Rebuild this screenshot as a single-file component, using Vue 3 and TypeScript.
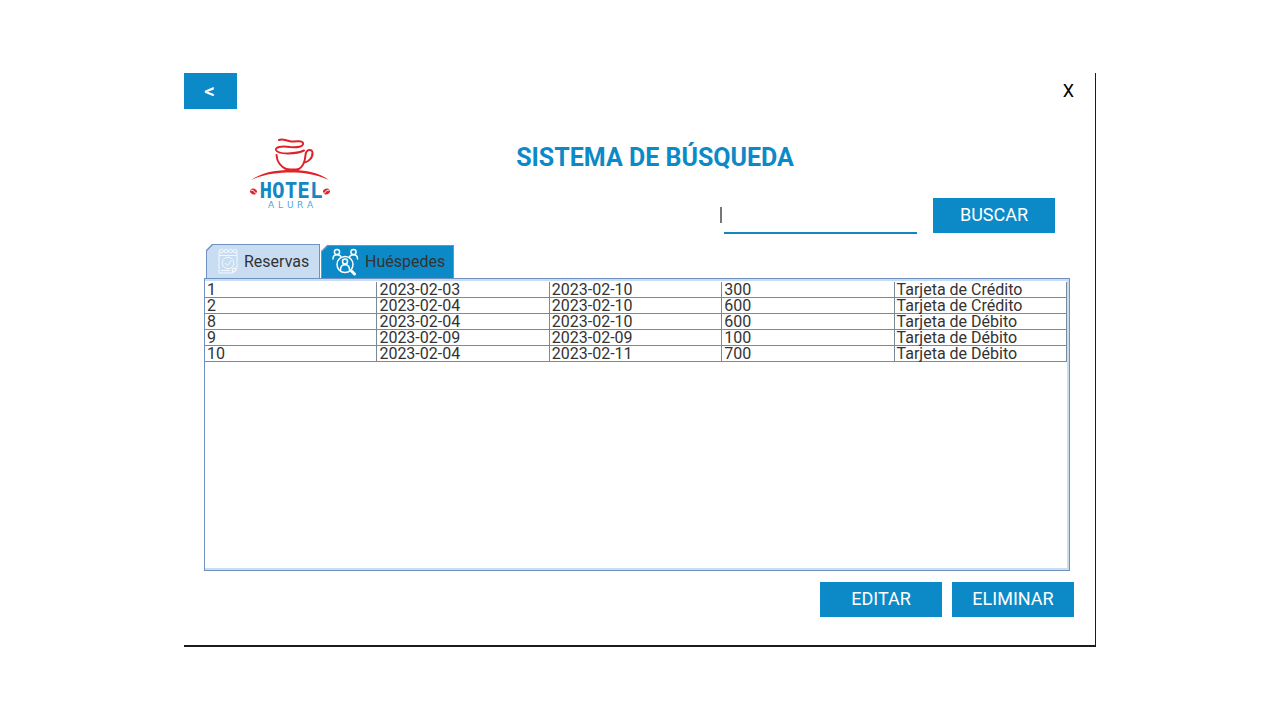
<script setup lang="ts">
import { ref } from 'vue'

interface Booking {
  id: number
  checkIn: string
  checkOut: string
  value: number
  payment: string
}

const bookings: Booking[] = [
  { id: 1, checkIn: '2023-02-03', checkOut: '2023-02-10', value: 300, payment: 'Tarjeta de Crédito' },
  { id: 2, checkIn: '2023-02-04', checkOut: '2023-02-10', value: 600, payment: 'Tarjeta de Crédito' },
  { id: 8, checkIn: '2023-02-04', checkOut: '2023-02-10', value: 600, payment: 'Tarjeta de Débito' },
  { id: 9, checkIn: '2023-02-09', checkOut: '2023-02-09', value: 100, payment: 'Tarjeta de Débito' },
  { id: 10, checkIn: '2023-02-04', checkOut: '2023-02-11', value: 700, payment: 'Tarjeta de Débito' },
]

const query = ref('')
</script>

<template>
  <div class="page">
    <main class="window">
      <div class="titlebar">
        <button type="button" class="back">&lt;</button>
        <button type="button" class="close">X</button>
      </div>

      <header class="head">
        <svg class="logo" viewBox="0 0 82 72" role="img" aria-labelledby="logo-title">
          <title id="logo-title">Hotel Alura</title>
          <g fill="none" stroke="#e02229" stroke-linecap="round">
            <path d="M30 3 C34 1 37 4 42 4.500 C48 5 53 2.500 54 6 C55 10 48 10.500 41 10 C32 9 26 10 27 13 C29 18 48 17 55 13.500" stroke-width="2" />
            <path d="M27.500 18 C28 25 32 30 38 32.500 H49 C54 30 56 25 56.500 18 C57 12 63 11.500 63.500 15.500 C64 21 59 25 55.500 25.500" stroke-width="2" />
            <path d="M38 32.500 C42 34 46 34 49 32.500" stroke-width="2.500" />
          </g>
          <path d="M2 43 C15 34 31 33 42 33 C55 33 69 35 80 43 C66 37 54 35.500 42 35.500 C29 35.500 15 37 2 43Z" fill="#e02229" />
          <g fill="#e02229">
            <ellipse cx="4.500" cy="54.500" rx="3.500" ry="2.800" transform="rotate(20 4.500 54.500)" />
            <ellipse cx="77.500" cy="54.500" rx="3.500" ry="2.800" transform="rotate(-20 77.500 54.500)" />
          </g>
          <g fill="none" stroke="#fff" stroke-width="1">
            <path d="M1.500 53 Q5 53 5.500 55 T9 56" />
            <path d="M80.500 53 Q77 53 76.500 55 T73 56" />
          </g>
          <text class="logo-name" x="42" y="61" text-anchor="middle">HOTEL</text>
          <text class="logo-sub" x="19 29 38 48 58" y="71">ALURA</text>
        </svg>

        <div class="head-main">
          <h1>SISTEMA DE BÚSQUEDA</h1>
          <form class="search" @submit.prevent>
            <span class="caret" aria-hidden="true"></span>
            <input v-model="query" type="text" aria-label="Buscar" />
            <button type="submit" class="action">BUSCAR</button>
          </form>
        </div>
      </header>

      <div class="tabs" role="tablist">
        <button id="tab-bookings" type="button" class="tab selected" role="tab" aria-selected="true" aria-controls="panel">
          <svg class="icon-cal" viewBox="0 0 20 26" fill="none" stroke="#f3f8fd" stroke-width="1" aria-hidden="true">
            <path d="M1 3.500 H19 V20 L14.500 25 H1Z M1 7.500 H19" />
            <g fill="#c8dcf2">
              <circle cx="3.500" cy="3" r="1.800" />
              <circle cx="8" cy="3" r="1.800" />
              <circle cx="12.500" cy="3" r="1.800" />
              <circle cx="17" cy="3" r="1.800" />
            </g>
            <circle cx="10" cy="15" r="5.800" />
            <path d="M7 15 L9.500 17.500 L13.500 12 M3 22.500 H12 M14.500 25 V20.500 H19" />
            <circle cx="16" cy="22" r="2" />
          </svg>
          <span>Reservas</span>
        </button>
        <button id="tab-guests" type="button" class="tab" role="tab" aria-selected="false" aria-controls="panel">
          <svg class="icon-guests" viewBox="0 0 28 28" fill="none" stroke="#fff" stroke-width="1.500" stroke-linecap="round" aria-hidden="true">
            <circle cx="6" cy="4" r="2.600" />
            <circle cx="22.500" cy="4" r="2.600" />
            <path d="M2 11 C2 7.500 4 6.800 6 6.800 C8 6.800 9.500 7.500 10 9 M18.500 9 C19 7.500 20.500 6.800 22.500 6.800 C24.500 6.800 26.500 7.500 26.500 11" />
            <circle cx="14" cy="16.500" r="8" />
            <circle cx="14" cy="13.500" r="2.500" />
            <path d="M9.500 22 C9.500 18 11 16.800 14 16.800 C17 16.800 18.500 18 18.500 22" />
            <path d="M20 22.500 L23.500 26" stroke-width="3" />
          </svg>
          <span>Huéspedes</span>
        </button>
      </div>

      <section id="panel" class="panel" role="tabpanel" aria-labelledby="tab-bookings">
        <table aria-label="Reservas">
          <tbody>
            <tr v-for="b in bookings" :key="b.id">
              <td>{{ b.id }}</td>
              <td>{{ b.checkIn }}</td>
              <td>{{ b.checkOut }}</td>
              <td>{{ b.value }}</td>
              <td>{{ b.payment }}</td>
            </tr>
          </tbody>
        </table>
      </section>

      <footer class="foot">
        <button type="button" class="action">EDITAR</button>
        <button type="button" class="action">ELIMINAR</button>
      </footer>
    </main>
  </div>
</template>

<style>
body {
  background: #fff;
}
</style>

<style scoped>
.page {
  box-sizing: border-box;
  display: flex;
  min-height: 100vh;
  padding: 73px 184px;
  font-family: Roboto, "Liberation Sans", sans-serif;
  color: #333;
}

.window {
  box-sizing: border-box;
  display: flex;
  flex: 1;
  flex-direction: column;
  min-width: 0;
  border-right: 1px solid #1b1b1b;
  border-bottom: 2px solid #1b1b1b;
}

button {
  padding: 0;
  border: 0;
  font-family: inherit;
  cursor: pointer;
}

.titlebar {
  display: flex;
  justify-content: space-between;
}

.back {
  width: 53px;
  height: 36px;
  padding-right: 2px;
  background: #0c8ac7;
  color: #fff;
  font-size: 21px;
  font-weight: 500;
}

.close {
  width: 53px;
  height: 36px;
  padding-bottom: 2px;
  background: transparent;
  color: #000;
  font-size: 18px;
}

.head {
  display: flex;
  align-items: flex-start;
  padding: 28px 40px 0 65px;
}

.logo {
  flex: none;
  width: 82px;
  height: 72px;
}

.logo-name {
  fill: #1787c4;
  font-family: "Liberation Sans Narrow", "DejaVu Sans Mono", monospace;
  font-size: 21px;
  font-weight: 700;
}

.logo-sub {
  fill: #4fa5d6;
  font-family: "DejaVu Sans", sans-serif;
  font-size: 9px;
}

.head-main {
  flex: 1;
}

h1 {
  margin: 0;
  padding: 7px 76px 0 0;
  color: #0c8ac7;
  font-size: 25px;
  font-weight: 700;
  line-height: 28px;
  text-align: center;
}

.search {
  display: flex;
  justify-content: flex-end;
  padding-top: 26px;
}

.caret {
  width: 2px;
  height: 16px;
  margin: 9px 2px 0 0;
  background: #777;
}

.search input {
  box-sizing: border-box;
  width: 193px;
  height: 36px;
  margin-right: 16px;
  padding: 0;
  border: 0;
  border-bottom: 2px solid #1585c0;
  outline: 0;
  background: transparent;
  font: inherit;
}

.action {
  width: 122px;
  height: 35px;
  padding-bottom: 2px;
  background: #0c8ac7;
  color: #fff;
  font-size: 18px;
}

.tabs {
  display: flex;
  align-items: flex-end;
  gap: 1px;
  height: 34px;
  padding: 10px 22px 0;
}

.tab {
  position: relative;
  z-index: 0;
  display: flex;
  align-items: center;
  box-sizing: border-box;
  width: 133px;
  height: 33px;
  padding-left: 10px;
  background: #6f92c0;
  clip-path: polygon(6px 0, 100% 0, 100% 100%, 0 100%, 0 6px);
  color: #333;
  font-size: 16px;
}

.tab::before {
  content: "";
  position: absolute;
  z-index: -1;
  inset: 1px 1px 0;
  background: #0c8ac7;
  clip-path: polygon(6px 0, 100% 0, 100% 100%, 0 100%, 0 6px);
}

.tab.selected {
  width: 114px;
  height: 34px;
  padding-left: 12px;
}

.tab.selected::before {
  background: #c8dcf2;
}

.icon-cal {
  width: 20px;
  height: 26px;
  margin-right: 6px;
}

.icon-guests {
  width: 28px;
  height: 28px;
  margin-right: 6px;
}

.panel {
  flex: 1;
  min-height: 80px;
  margin: 0 25px 0 20px;
  padding-top: 3px;
  border: 1px solid #6f92c0;
  box-shadow: inset 0 2px #c8dcf2, inset -2px -2px #c8dcf2;
}

table {
  width: calc(100% - 2px);
  border-collapse: separate;
  border-spacing: 0;
  table-layout: fixed;
}

td {
  height: 15px;
  padding: 0 0 0 2px;
  border-right: 1px solid #7a8a99;
  border-bottom: 1px solid #7a8a99;
  font-size: 16px;
  line-height: 15px;
  white-space: nowrap;
}

.foot {
  display: flex;
  justify-content: flex-end;
  gap: 10px;
  padding: 11px 21px 28px;
}
</style>
